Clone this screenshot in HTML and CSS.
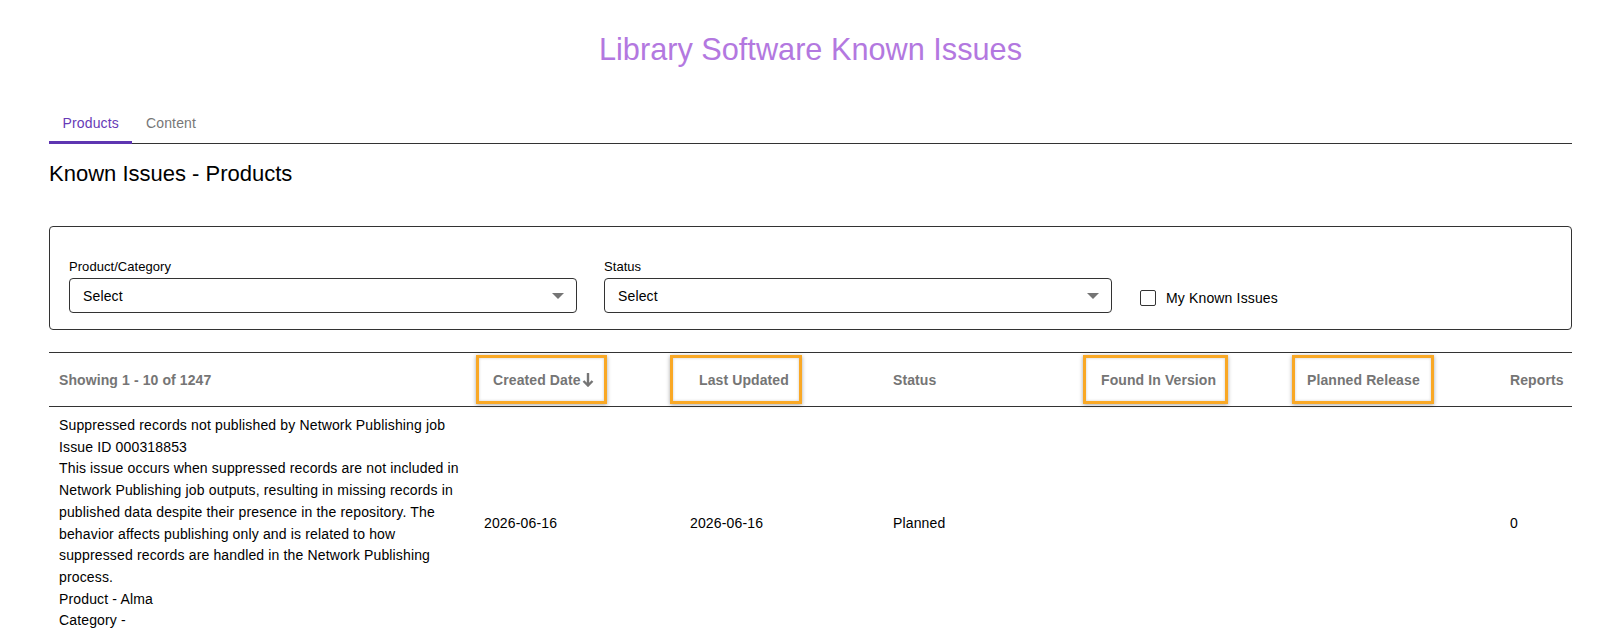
FILE: index.html
```html
<!DOCTYPE html>
<html>
<head>
    <title>Library Software Known Issues</title>
    <link rel="stylesheet" href="styles.css">
</head>
<body>
    <div class="page">
        <h1 class="app-title">Library Software Known Issues</h1>

        <div class="tabs">
            <div class="tab active">Products</div>
            <div class="tab">Content</div>
        </div>

        <h2 class="section-title">Known Issues - Products</h2>

        <div class="filters">
            <div class="field">
                <label class="field-label">Product/Category</label>
                <div class="select">
                    <span>Select</span>
                    <span class="caret"></span>
                </div>
            </div>
            <div class="field">
                <label class="field-label">Status</label>
                <div class="select">
                    <span>Select</span>
                    <span class="caret"></span>
                </div>
            </div>
            <label class="check">
                <span class="check-box"></span>
                <span>My Known Issues</span>
            </label>
        </div>

        <table class="issues">
            <colgroup>
                <col class="c-desc">
                <col class="c-created">
                <col class="c-updated">
                <col class="c-status">
                <col class="c-found">
                <col class="c-planned">
                <col class="c-reports">
            </colgroup>
            <thead>
                <tr>
                    <th>Showing 1 - 10 of 1247</th>
                    <th class="sortable"><span class="mark mark-created">Created Date<svg class="sort-arrow" width="12" height="15" viewBox="0 0 12 15"><path d="M6 1V13.5M1.5 9L6 13.5L10.5 9" fill="none" stroke="#757575" stroke-width="2.4"/></svg></span></th>
                    <th class="sortable"><span class="mark mark-updated">Last Updated</span></th>
                    <th>Status</th>
                    <th><span class="mark mark-found">Found In Version</span></th>
                    <th><span class="mark mark-planned">Planned Release</span></th>
                    <th>Reports</th>
                </tr>
            </thead>
            <tbody>
                <tr>
                    <td class="desc">
                        <div>Suppressed records not published by Network Publishing job</div>
                        <div>Issue ID 000318853</div>
                        <div>This issue occurs when suppressed records are not included in Network Publishing job outputs, resulting in missing records in published data despite their presence in the repository. The behavior affects publishing only and is related to how suppressed records are handled in the Network Publishing process.</div>
                        <div>Product - Alma</div>
                        <div>Category -</div>
                    </td>
                    <td>2026-06-16</td>
                    <td>2026-06-16</td>
                    <td>Planned</td>
                    <td></td>
                    <td></td>
                    <td>0</td>
                </tr>
            </tbody>
        </table>
    </div>
</body>
</html>
```

FILE: styles.css
```css
body {
    margin: 0;
    font-family: "Liberation Sans", Arial, sans-serif;
    color: #000;
    background: #fff;
    letter-spacing: 0.15px;
}
.page {
    padding: 0 35px 0 49px;
}
.app-title {
    margin: 32px 0 0;
    font-size: 30.7px;
    line-height: 36px;
    font-weight: normal;
    letter-spacing: 0;
    text-align: center;
    color: #b378e0;
}
.tabs {
    display: flex;
    margin-top: 35px;
    border-bottom: 1px solid #333;
}
.tab {
    padding: 12px 13.5px 10px;
    margin-bottom: -1px;
    font-size: 14px;
    line-height: 16px;
    color: #777;
    border-bottom: 3px solid transparent;
}
.tab.active {
    color: #673ab7;
    border-bottom-color: #5e35b1;
}
.section-title {
    margin: 17px 0 0;
    font-size: 22px;
    line-height: 26px;
    font-weight: normal;
    letter-spacing: 0;
}
.filters {
    display: flex;
    align-items: flex-end;
    gap: 27px;
    margin-top: 39px;
    padding: 32px 19px 16px;
    border: 1px solid #333;
    border-radius: 4px;
}
.field {
    width: 508px;
}
.field-label {
    display: block;
    margin-bottom: 4px;
    font-size: 13px;
    line-height: 15px;
    letter-spacing: 0.05px;
}
.select {
    display: flex;
    align-items: center;
    justify-content: space-between;
    height: 35px;
    box-sizing: border-box;
    padding: 0 12px 0 13px;
    border: 1px solid #333;
    border-radius: 4px;
    font-size: 14px;
}
.caret {
    width: 0;
    height: 0;
    border-left: 6px solid transparent;
    border-right: 6px solid transparent;
    border-top: 6px solid #757575;
}
.check {
    display: flex;
    align-items: center;
    gap: 10px;
    margin: 0 0 7px 1px;
    font-size: 14px;
    line-height: 16px;
}
.check-box {
    width: 16px;
    height: 16px;
    box-sizing: border-box;
    border: 1px solid #333;
    border-radius: 2px;
}
.issues {
    width: 100%;
    margin-top: 22px;
    border-collapse: collapse;
    table-layout: fixed;
    font-size: 14px;
}
.c-desc { width: 432px; }
.c-created { width: 206px; }
.c-updated { width: 203px; }
.c-status { width: 208px; }
.c-found { width: 206px; }
.c-planned { width: 203px; }
.c-reports { width: 65px; }
.issues thead tr {
    border-top: 1px solid #333;
    border-bottom: 1px solid #333;
}
.issues th {
    padding: 19px 0 18px 3px;
    line-height: 16px;
    font-weight: bold;
    color: #757575;
    text-align: left;
    white-space: nowrap;
    letter-spacing: 0.1px;
}
.issues th:first-child,
.issues td:first-child {
    padding-left: 10px;
}
.issues td:first-child {
    padding-right: 17px;
}
.issues th.sortable {
    padding-left: 12px;
}
.sort-arrow {
    margin-left: 1px;
    vertical-align: -2px;
}
.mark {
    position: relative;
}
.mark::after {
    content: "";
    position: absolute;
    top: -17px;
    bottom: -16px;
    left: -16px;
    right: -13px;
    border: 3px solid #f9a825;
    box-shadow: 0 1px 4px rgba(0, 0, 0, 0.35), inset 0 0 3px rgba(0, 0, 0, 0.2);
}
.mark-created::after { left: -17px; right: -13px; }
.mark-updated::after { left: -29px; right: -13px; }
.mark-found::after { left: -18px; right: -12px; }
.mark-planned::after { left: -15px; right: -14px; }
.issues td {
    padding: 8px 0 8px 3px;
    line-height: 21.7px;
    vertical-align: middle;
}
```
